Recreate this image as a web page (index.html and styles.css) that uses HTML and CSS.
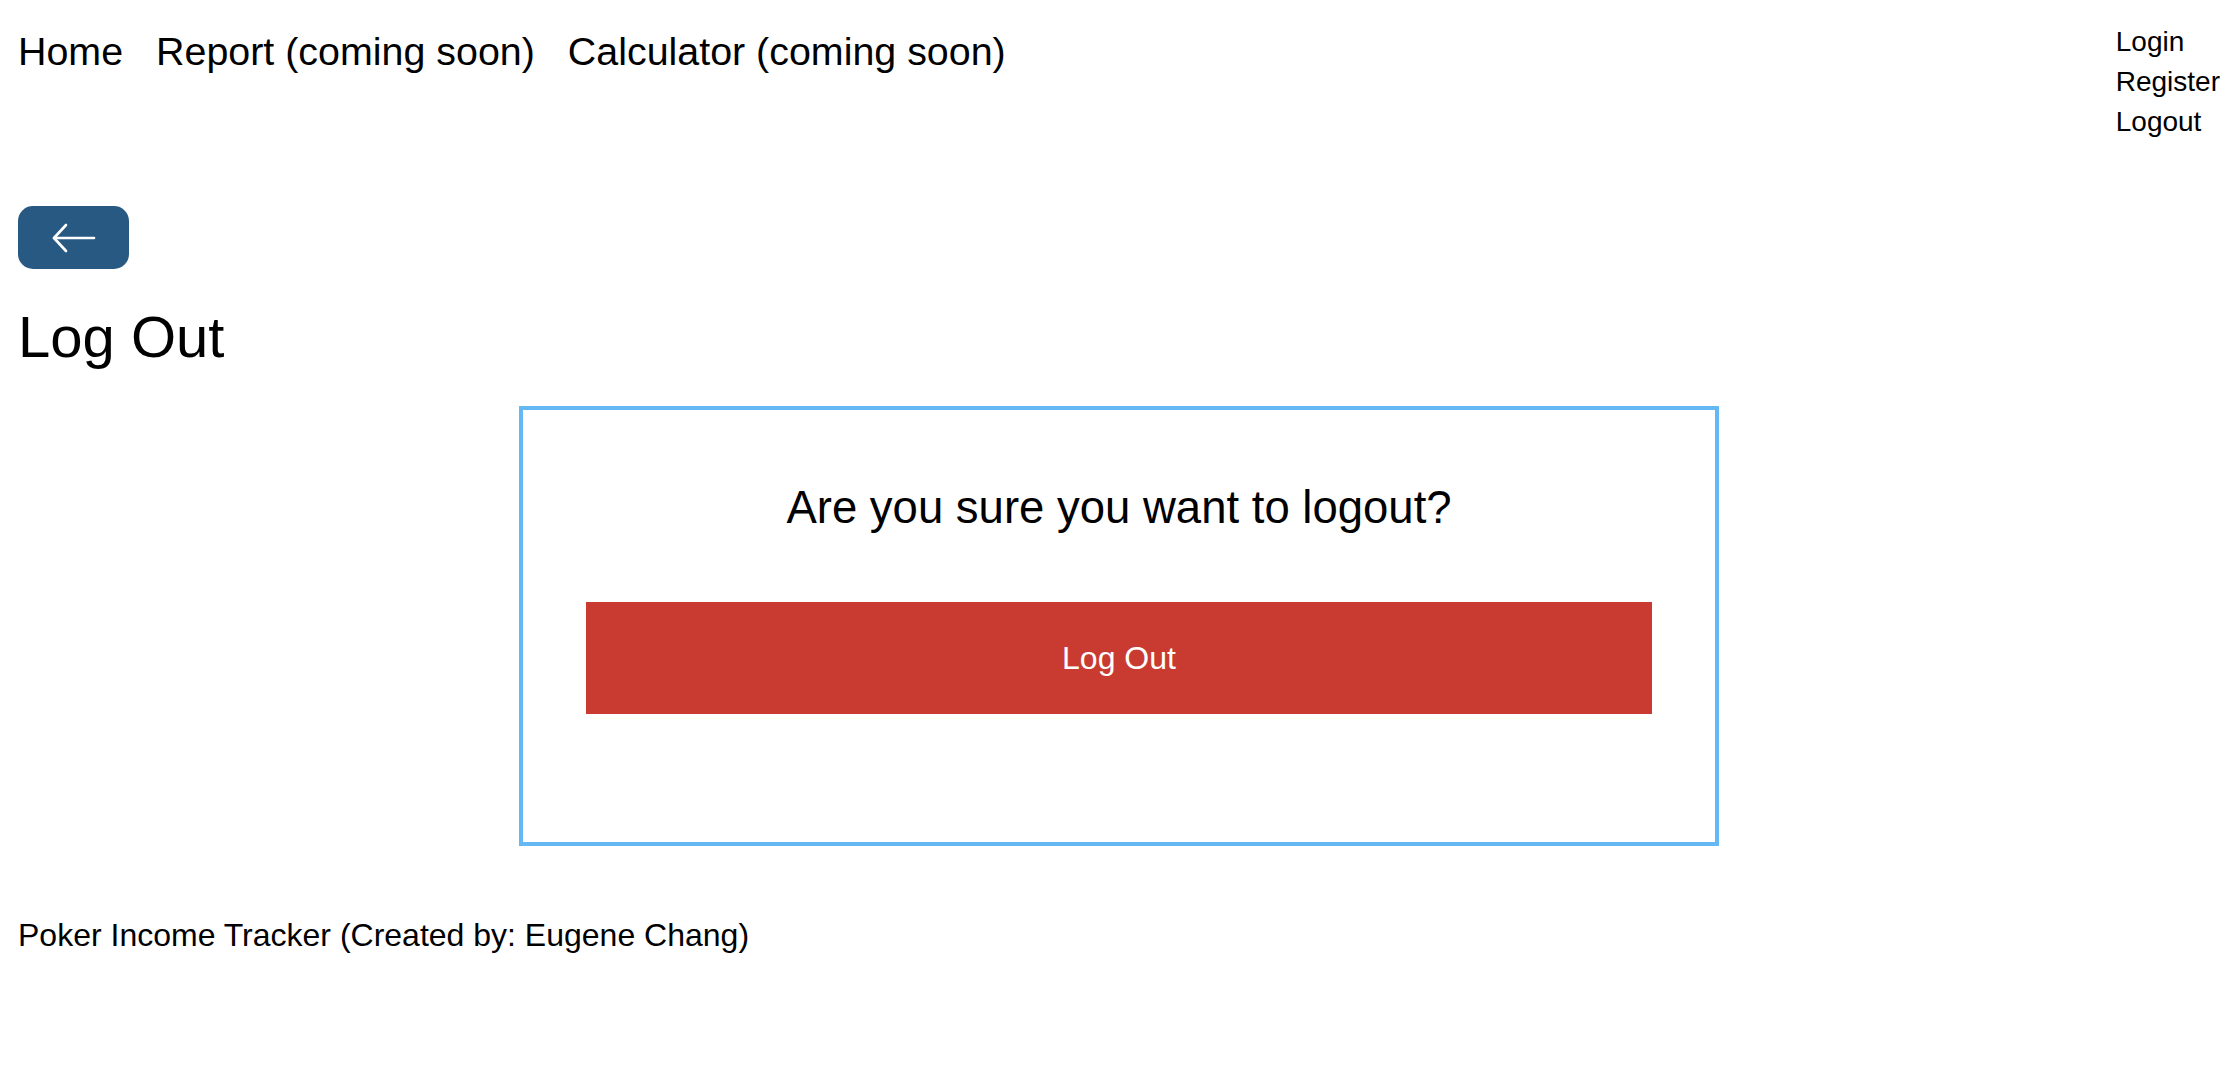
FILE: index.html
```html
<!DOCTYPE html>
<html lang="en">
<head>
<meta charset="utf-8">
<title>Log Out - Poker Income Tracker</title>
<link rel="stylesheet" href="styles.css">
</head>
<body>
<header class="topbar">
  <nav class="main-nav">
    <a href="#" class="nav-link">Home</a>
    <a href="#" class="nav-link">Report (coming soon)</a>
    <a href="#" class="nav-link">Calculator (coming soon)</a>
  </nav>
  <ul class="auth-links">
    <li><a href="#">Login</a></li>
    <li><a href="#">Register</a></li>
    <li><a href="#">Logout</a></li>
  </ul>
</header>
<main class="content">
  <button class="back-btn" type="button" aria-label="Back">
    <svg width="44" height="30" viewBox="0 0 44 30" fill="none" stroke="#ffffff" stroke-width="2.6" stroke-linecap="round" stroke-linejoin="round">
      <path d="M42 15 H2"/>
      <path d="M14 2 L2 15 L14 28"/>
    </svg>
  </button>
  <h1 class="page-title">Log Out</h1>
  <section class="confirm-box">
    <h2 class="confirm-question">Are you sure you want to logout?</h2>
    <button class="logout-btn" type="button">Log Out</button>
  </section>
</main>
<footer class="footer">Poker Income Tracker (Created by: Eugene Chang)</footer>
</body>
</html>
```

FILE: styles.css
```css
html, body {
  margin: 0;
  padding: 0;
  background: #ffffff;
  color: #000000;
  font-family: "Liberation Sans", Arial, sans-serif;
}

a {
  color: #000000;
  text-decoration: none;
}

.topbar {
  display: flex;
  justify-content: space-between;
  align-items: flex-start;
  padding: 0 18px;
}

.main-nav {
  display: flex;
  gap: 33px;
  padding-top: 29px;
  font-size: 39.4px;
  line-height: 44px;
}

.auth-links {
  list-style: none;
  margin: 0;
  padding: 22px 0 0 0;
  font-size: 28px;
  line-height: 40px;
}

.content {
  padding: 0 18px;
  display: flex;
  flex-direction: column;
}

.back-btn {
  margin-top: 64px;
  width: 111px;
  height: 63px;
  border: none;
  border-radius: 15px;
  background: #285982;
  display: flex;
  align-items: center;
  justify-content: center;
  padding: 0;
  cursor: pointer;
}

.page-title {
  margin: 34px 0 0 0;
  font-size: 58px;
  line-height: 68px;
  font-weight: 400;
}

.confirm-box {
  box-sizing: border-box;
  width: 1200px;
  margin: 35px auto 0 auto;
  border: 4px solid #64b9f5;
  padding: 71px 63px 128px 63px;
  display: flex;
  flex-direction: column;
  align-items: stretch;
}

.confirm-question {
  margin: 0;
  font-size: 45.5px;
  line-height: 54px;
  font-weight: 400;
  text-align: center;
}

.logout-btn {
  margin-top: 67px;
  height: 112px;
  border: none;
  background: #c93a31;
  color: #ffffff;
  font-family: "Liberation Sans", Arial, sans-serif;
  font-size: 32px;
  cursor: pointer;
}

.footer {
  padding: 69px 18px 0 18px;
  font-size: 32px;
  line-height: 40px;
}
```
